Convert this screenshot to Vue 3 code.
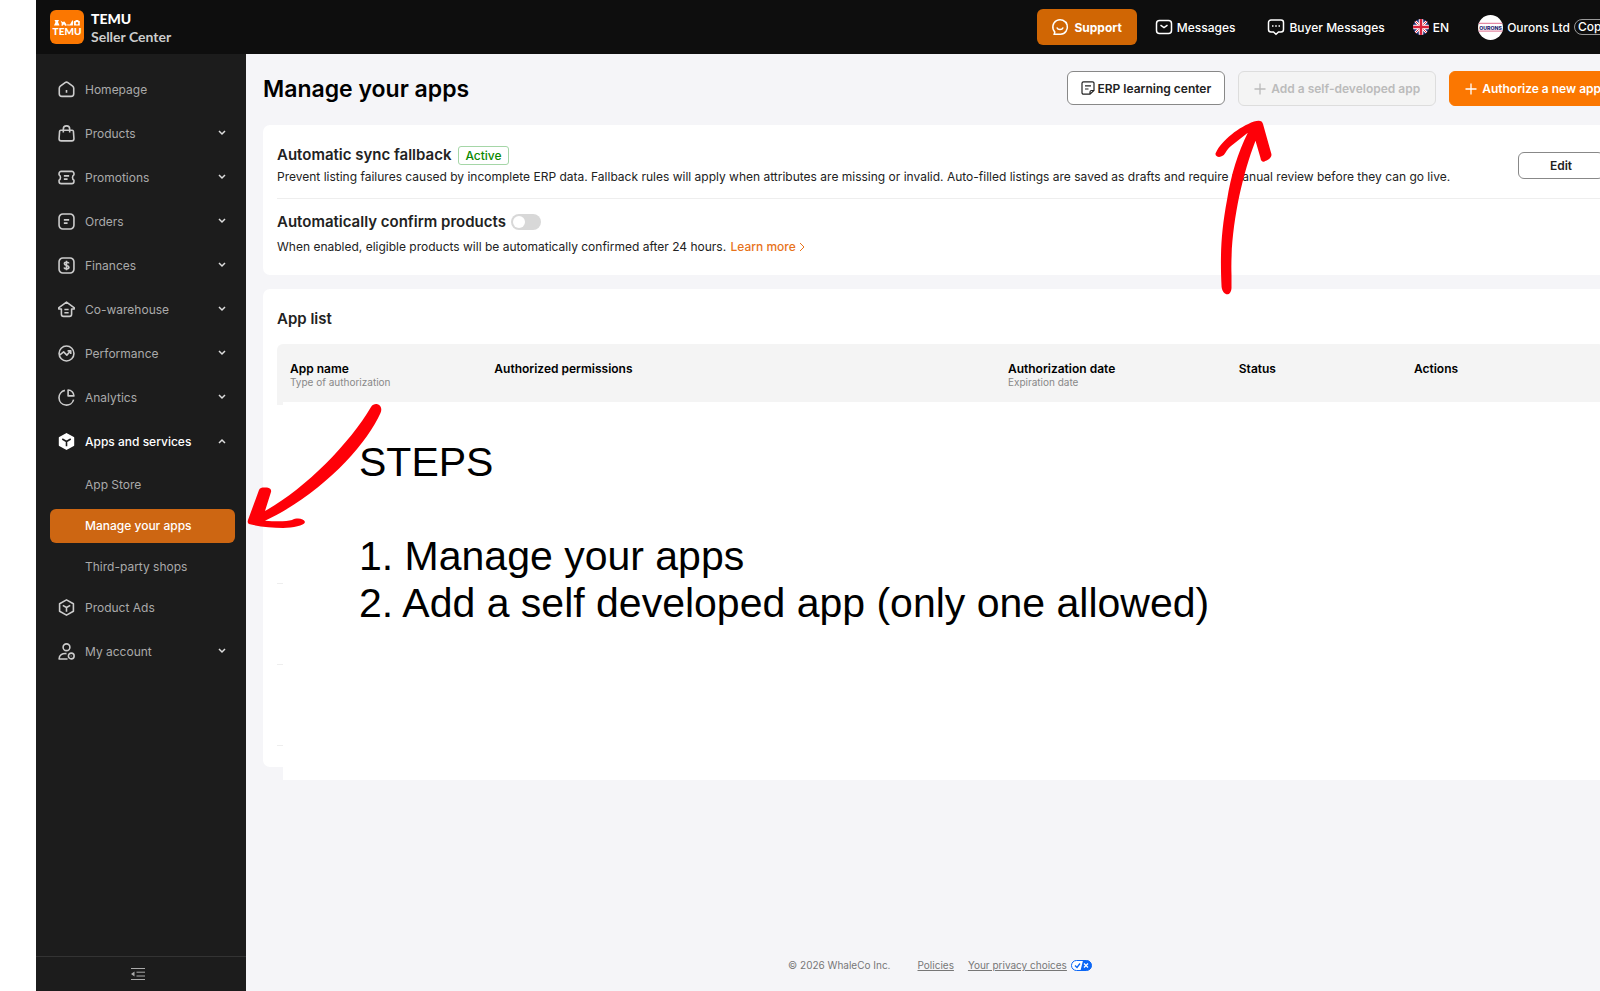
<template>
  <div class="viewport">
    <div class="shell">
      <header class="topbar">
        <a class="brand" href="#">
          <svg class="brand-logo" viewBox="0 0 34 34" aria-hidden="true">
            <rect width="34" height="34" rx="6" fill="#fb7701" />
            <g fill="#fff">
              <path d="M4.500 10h4.500l-1 2 1.500 3.500h-5.500L5.500 12z" />
              <path d="M10.500 10.500l2 1.500 2-.5 2 3v1.200h-1.500l-1-1.500-1.500 1.500h-1l.2-2.500z" />
              <path d="M17 14.500h3l2.500-4.500.8 2-.5 3.500h-5.500z" />
              <path fill-rule="evenodd" d="M25 11l1-1h2l1 1h.8v4.500h-5.800V11zM27 12a1.300 1.300 0 1 0 0 2.600 1.300 1.300 0 0 0 0-2.600z" />
            </g>
            <text class="logo-text" x="17" y="25" text-anchor="middle">TEMU</text>
          </svg>
          <span class="brand-name">
            <strong>TEMU</strong>
            <span>Seller Center</span>
          </span>
        </a>

        <div class="topbar-actions">
          <button class="support" type="button">
            <svg class="icon-top" viewBox="0 0 18 18">
              <path d="M3.200 16.200l.6-2.200A7.300 7.300 0 1 1 9.500 16.300z" />
              <path d="M5.800 9.500c1.200 2.800 5.200 2.800 6.400 0" />
            </svg>
            Support
          </button>
          <a class="top-link messages" href="#">
            <svg class="icon-top" viewBox="0 0 18 18">
              <rect x="1.500" y="2.500" width="15" height="13" rx="3" />
              <path d="M5.500 7.200L9 9.600l3.500-2.400" />
            </svg>
            Messages
          </a>
          <a class="top-link buyer" href="#">
            <svg class="icon-top" viewBox="0 0 18 18">
              <path d="M4 2h10a2.500 2.500 0 0 1 2.500 2.500v7A2.500 2.500 0 0 1 14 14h-2.500L9 16.200 6.500 14H4a2.500 2.500 0 0 1-2.500-2.500v-7A2.500 2.500 0 0 1 4 2z" />
              <path d="M5 8h1.500M8.200 8h1.600M11.500 8H13" />
            </svg>
            Buyer Messages
          </a>
          <button class="top-link language" type="button">
            <svg class="flag" viewBox="0 0 16 16">
              <defs>
                <clipPath id="flag-clip"><circle cx="8" cy="8" r="8" /></clipPath>
              </defs>
              <g clip-path="url(#flag-clip)">
                <rect width="16" height="16" fill="#1f2f7a" />
                <path d="M0 0l16 16M16 0L0 16" stroke="#fff" stroke-width="2.500" />
                <path d="M0 0l16 16M16 0L0 16" stroke="#d8203a" stroke-width="1" />
                <path d="M8 0v16M0 8h16" stroke="#fff" stroke-width="4.500" />
                <path d="M8 0v16M0 8h16" stroke="#d8203a" stroke-width="2.500" />
              </g>
            </svg>
            EN
          </button>
          <div class="account">
            <svg class="avatar" viewBox="0 0 24 24">
              <defs>
                <clipPath id="avatar-clip"><circle cx="12" cy="12" r="12" /></clipPath>
              </defs>
              <g clip-path="url(#avatar-clip)">
                <rect width="24" height="24" fill="#fff" />
                <path d="M0 8h24M0 15.500h24" stroke="#e58aa5" stroke-width="1.200" />
                <text class="avatar-text" x="12" y="14" text-anchor="middle">OURONS</text>
              </g>
            </svg>
            <span>Ourons Ltd</span>
            <button class="copy" type="button">Cop</button>
          </div>
        </div>
      </header>

      <div class="body">
        <aside class="sidebar">
          <nav class="nav">
            <template v-for="item in menu" :key="item.label">
              <a class="nav-item" :class="{ 'nav-item--open': item.children }" href="#">
                <svg class="nav-icon" viewBox="0 0 16 16">
                  <path v-if="item.solid" class="solid" :d="item.solid" />
                  <path :class="{ cut: item.solid }" :d="item.icon" />
                </svg>
                <span class="nav-label">{{ item.label }}</span>
                <svg v-if="item.arrow" class="chevron" viewBox="0 0 8 8">
                  <path :d="item.arrow === 'up' ? 'M1 6l3-3 3 3' : 'M1 2l3 3 3-3'" />
                </svg>
              </a>
              <div v-if="item.children" class="subnav">
                <a
                  v-for="child in item.children"
                  :key="child"
                  class="subnav-item"
                  :class="{ 'subnav-item--active': child === current }"
                  href="#"
                >{{ child }}</a>
              </div>
            </template>
          </nav>
          <button class="collapse" type="button" aria-label="Collapse menu">
            <svg viewBox="0 0 14 14">
              <path d="M0 1.500h14M5.500 5.200H14M5.500 9H14M0 12.500h14" />
              <path class="solid" d="M0 7l3.500-2.500v5z" />
            </svg>
          </button>
        </aside>

        <main class="main">
          <div class="page-head">
            <h1>Manage your apps</h1>
            <div class="page-actions">
              <button class="btn btn--erp" type="button">
                <svg class="icon-doc" viewBox="0 0 14 14">
                  <path d="M9 13.200H2.500A1.500 1.500 0 0 1 1 11.700V2.300A1.500 1.500 0 0 1 2.500.8h9A1.500 1.500 0 0 1 13 2.300V9.500zM9 13.200V11a1.500 1.500 0 0 1 1.500-1.500H13M4 4.800h6M4 8h3.500" />
                </svg>
                ERP learning center
              </button>
              <button class="btn btn--disabled" type="button" disabled>
                <svg class="icon-plus" viewBox="0 0 12 12"><path d="M6 .5v11M.5 6h11" /></svg>
                Add a self-developed app
              </button>
              <button class="btn btn--primary" type="button">
                <svg class="icon-plus" viewBox="0 0 12 12"><path d="M6 .5v11M.5 6h11" /></svg>
                Authorize a new app
              </button>
            </div>
          </div>

          <section class="card settings">
            <div class="setting">
              <div>
                <h2>Automatic sync fallback <span class="tag">Active</span></h2>
                <p>Prevent listing failures caused by incomplete ERP data. Fallback rules will apply when attributes are missing or invalid. Auto-filled listings are saved as drafts and require manual review before they can go live.</p>
              </div>
              <button class="btn btn--edit" type="button">Edit</button>
            </div>
            <div class="setting setting--confirm">
              <div>
                <h2>
                  <label for="auto-confirm">Automatically confirm products</label>
                  <input id="auto-confirm" v-model="autoConfirm" class="switch" type="checkbox" />
                </h2>
                <p>
                  When enabled, eligible products will be automatically confirmed after 24 hours.
                  <a class="learn" href="#">Learn more<svg viewBox="0 0 6 10"><path d="M1 1l4 4-4 4" /></svg></a>
                </p>
              </div>
            </div>
          </section>

          <section class="card list">
            <h2>App list</h2>
            <table class="apps">
              <thead>
                <tr>
                  <th v-for="col in columns" :key="col.title" :style="{ width: col.width }">
                    {{ col.title }}
                    <small v-if="col.sub">{{ col.sub }}</small>
                  </th>
                </tr>
              </thead>
              <tbody>
                <tr class="row--tall"><td colspan="5"></td></tr>
                <tr><td colspan="5"></td></tr>
                <tr><td colspan="5"></td></tr>
              </tbody>
            </table>
            <div class="steps">
              <p class="steps-title">STEPS</p>
              <p>1. Manage your apps</p>
              <p>2. Add a self developed app (only one allowed)</p>
            </div>
          </section>

          <footer class="footer">
            <span>© 2026 WhaleCo Inc.</span>
            <a href="#">Policies</a>
            <span class="privacy">
              <a href="#">Your privacy choices</a>
              <svg viewBox="0 0 21 11">
                <rect x=".5" y=".5" width="20" height="10" rx="5" fill="#fff" stroke="#0b66f5" />
                <path d="M12 .5h3.500a5 5 0 0 1 0 10H9.500z" fill="#0b66f5" />
                <path d="M4 5.500l2 2 3-4" fill="none" stroke="#0b66f5" stroke-width="1.300" />
                <path d="M13 3.500l4 4M17 3.500l-4 4" stroke="#fff" stroke-width="1.300" />
              </svg>
            </span>
          </footer>
        </main>
      </div>

      <!-- hand-drawn pointers for the two steps -->
      <svg class="pointer pointer--menu" viewBox="246 402 138 128" aria-hidden="true">
        <path d="M371 407C375 401 384 405 380.500 413C366 446 320 495 265 520.700C276 521.500 287 521.500 292 520C297 517.500 304 518.500 305 522C304 526 293 527.500 283 528C272 528 258 526.500 249 524Q247 523 248 520L259 490C260 487 264 487.300 267 487.600Q272 488.500 271 492L265 511C305 489 350 443 371 407z" />
      </svg>
      <svg class="pointer pointer--add" viewBox="1214 118 60 180" aria-hidden="true">
        <path d="M1221.600 287C1220 256 1221 232 1227 200C1231 175 1238 152 1247.800 132.700L1231 146C1225 151 1226 155 1221 156.500C1218 158 1214 155.500 1216 152.500C1222 140 1239 127 1254 121.500Q1262 119 1263 124L1271.400 154C1272 158 1268 160 1264 161.700Q1261 162 1260.500 158L1255.500 140.700C1241 178 1230 231 1231.500 275V288C1231 297 1223 296 1221.600 287z" />
      </svg>
    </div>
  </div>
</template>

<script setup>
import { ref } from 'vue'

const current = ref('Manage your apps')
const autoConfirm = ref(false)

const box = 'M8 .8l6.500 3.700v7L8 15.200l-6.500-3.700v-7z'
const frame = 'M4.500 1h7A3.500 3.500 0 0 1 15 4.500v7a3.500 3.500 0 0 1-3.500 3.500h-7A3.500 3.500 0 0 1 1 11.500v-7A3.500 3.500 0 0 1 4.500 1z'

const menu = [
  { label: 'Homepage', icon: 'M1.200 6.800c0-1 .4-1.500 1-2L6.700 1.500c.8-.6 1.800-.6 2.600 0l4.500 3.300c.6.500 1 1 1 2V12a2.500 2.500 0 0 1-2.500 2.500H3.700A2.500 2.500 0 0 1 1.200 12zM8 8.500v2.500' },
  { label: 'Products', arrow: 'down', icon: 'M2.500 5h11c.6 0 .9.300 1 .9l.5 7c0 1.300-.7 2-2 2H3c-1.300 0-2-.7-2-2l.5-7c.1-.6.4-.9 1-.9zM5 7V3.800a3 3 0 0 1 6 0V7' },
  { label: 'Promotions', arrow: 'down', icon: 'M3 2.200h10a2 2 0 0 1 2 2v1.300c-1.800 1-1.800 4 0 5v1.300a2 2 0 0 1-2 2H3a2 2 0 0 1-2-2v-1.300c1.800-1 1.800-4 0-5V4.200a2 2 0 0 1 2-2zM5.500 6.500h5M5.500 9.500h3.500' },
  { label: 'Orders', arrow: 'down', icon: frame + 'M5.500 6.500h5M5.500 9.500h3.500' },
  { label: 'Finances', arrow: 'down', icon: frame + 'M10.300 6C10 4.700 6 4.300 6 6.300S10.300 7.700 10.300 9.700 6 11.500 5.700 9.900M8 3.500v9' },
  { label: 'Co-warehouse', arrow: 'down', icon: 'M3.200 7.500H.8L.6 6.500 8 1l7.400 5.500-.2 1h-2.400v5a2 2 0 0 1-2 2H5.200a2 2 0 0 1-2-2zM6 8h4M6 11h4' },
  { label: 'Performance', arrow: 'down', icon: 'M8 1a7 7 0 1 0 0 14A7 7 0 0 0 8 1zM1.500 9.500l3.800-3 3 3 3.500-3.800M9 5.500h3v3' },
  { label: 'Analytics', arrow: 'down', icon: 'M6.500 1.300A7 7 0 1 0 14.700 10M9.500 1v5.500H15C15 3.500 12.500 1 9.500 1z' },
  {
    label: 'Apps and services',
    arrow: 'up',
    solid: box,
    icon: 'M4 5.700l4 2.300 4-2.300M8 8v4.500',
    children: ['App Store', 'Manage your apps', 'Third-party shops']
  },
  { label: 'Product Ads', icon: box + 'M4.500 6L8 8l3.500-2M8 8v4' },
  { label: 'My account', arrow: 'down', icon: 'M8 .8a3.200 3.200 0 1 0 0 6.400A3.200 3.200 0 0 0 8 .8zM8 10C4 9.500 1 11.500 1 15h8M12.500 9.500a2.700 2.700 0 1 0 0 5.400 2.700 2.700 0 0 0 0-5.400zM12.500 12v.5' }
]

const columns = [
  { title: 'App name', sub: 'Type of authorization', width: '15.4%' },
  { title: 'Authorized permissions', width: '38.7%' },
  { title: 'Authorization date', sub: 'Expiration date', width: '17.4%' },
  { title: 'Status', width: '13.2%' },
  { title: 'Actions', width: '15.3%' }
]
</script>

<style>
body {
  margin: 0;
  background: #fff;
}
</style>

<style scoped>
* {
  box-sizing: border-box;
}

h1,
h2,
p {
  margin: 0;
}

button {
  font: inherit;
  color: inherit;
  border: none;
  background: none;
  padding: 0;
  cursor: pointer;
}

a {
  color: inherit;
  text-decoration: none;
}

svg {
  flex: none;
  fill: none;
}

/* the console is a little wider than the window and is cut at the right */
.viewport {
  padding-left: 36px;
  overflow: hidden;
  font-family: Inter, "Liberation Sans", sans-serif;
  font-size: 12px;
  color: #222;
}

.shell {
  position: relative;
  display: flex;
  flex-direction: column;
  min-height: 100vh;
  margin-right: -34px;
}

.topbar {
  display: flex;
  align-items: center;
  justify-content: space-between;
  height: 54px;
  padding: 0 24px 0 14px;
  background: #0e0e0e;
  color: #fff;
}

.brand {
  display: flex;
  align-items: center;
  gap: 7px;
}

.brand-logo {
  width: 34px;
  height: 34px;
}

.logo-text {
  font: 900 10px Lato, sans-serif;
  fill: #fff;
}

.brand-name {
  display: flex;
  flex-direction: column;
  padding-top: 2px;
  font-family: Lato, sans-serif;
  font-size: 14px;
  font-weight: 700;
  line-height: 18px;
  color: #ccc;
}

.brand-name strong {
  color: #fff;
}

.topbar-actions,
.top-link,
.account {
  display: flex;
  align-items: center;
}

.topbar-actions {
  font-weight: 500;
}

.top-link {
  gap: 4px;
}

.support {
  display: flex;
  align-items: center;
  gap: 5px;
  height: 36px;
  padding: 0 15px 0 14px;
  border-radius: 6px;
  background: #d06604;
  font-weight: 700;
}

.icon-top {
  width: 18px;
  height: 18px;
  stroke: currentColor;
  stroke-width: 1.5;
}

.messages {
  margin-left: 18px;
}

.buyer {
  margin-left: 32px;
}

.language {
  margin-left: 28px;
}

.flag {
  width: 16px;
  height: 16px;
}

.account {
  gap: 4px;
  margin-left: 29px;
}

.avatar {
  width: 25px;
  height: 25px;
}

.avatar-text {
  font: 800 5px Inter, sans-serif;
  fill: #1f2370;
}

.copy {
  width: 36px;
  height: 16px;
  padding: 0 3px;
  border: 1px solid #999;
  border-radius: 8px;
  line-height: 14px;
  text-align: left;
}

.body {
  flex: 1;
  display: flex;
}

.sidebar {
  flex: none;
  display: flex;
  flex-direction: column;
  width: 210px;
  background: #1c1c1c;
  color: #aaa;
}

.nav {
  flex: 1;
  padding: 13px 11px 0 14px;
}

.nav-item {
  display: flex;
  align-items: center;
  height: 44px;
  padding: 0 9px 0 8px;
}

.nav-item--open {
  color: #fff;
  font-weight: 500;
}

.nav-icon {
  width: 17px;
  height: 17px;
  margin-right: 10px;
  color: #ccc;
  stroke: currentColor;
  stroke-width: 1.5;
  stroke-linejoin: round;
}

.nav-item--open .nav-icon {
  color: #fff;
}

.solid {
  fill: currentColor;
}

.cut {
  stroke: #1c1c1c;
}

.nav-label {
  flex: 1;
}

.chevron {
  width: 8px;
  height: 8px;
  stroke: #ddd;
  stroke-width: 1.5;
}

.subnav {
  display: grid;
  gap: 7px;
  padding: 5px 0 1px;
}

.subnav-item {
  height: 34px;
  padding-left: 35px;
  border-radius: 6px;
  line-height: 34px;
}

.subnav-item--active {
  background: #cd6612;
  color: #fff;
  font-weight: 500;
}

.collapse {
  display: flex;
  align-items: center;
  justify-content: center;
  height: 35px;
  padding-right: 6px;
  border-top: 1px solid #333;
}

.collapse svg {
  width: 14px;
  height: 14px;
  stroke: currentColor;
}

.collapse .solid {
  stroke: none;
}

.main {
  flex: 1;
  display: flex;
  flex-direction: column;
  min-width: 0;
  padding: 0 17px;
  background: #f5f5f8;
}

.page-head {
  display: flex;
  align-items: center;
  justify-content: space-between;
  height: 71px;
  padding-bottom: 2px;
}

h1 {
  font-size: 23px;
  font-weight: 600;
  line-height: 28px;
  color: #000;
}

.page-actions {
  display: flex;
  align-items: flex-start;
  gap: 13px;
}

.btn {
  display: flex;
  align-items: center;
  justify-content: center;
  gap: 5px;
  height: 35px;
  padding: 0 15px;
  border: 1px solid #888;
  border-radius: 6px;
  background: #fff;
  font-weight: 600;
  white-space: nowrap;
}

.btn--erp {
  gap: 2px;
  height: 34px;
  padding: 0 13px;
}

.btn--disabled {
  border-color: #ddd;
  background: #f4f4f4;
  color: #bbb;
  cursor: not-allowed;
}

.btn--primary {
  border-color: #fb7701;
  background: #fb7701;
  color: #fff;
}

.btn--edit {
  flex: none;
  width: 86px;
  height: 27px;
}

.icon-doc {
  width: 14px;
  height: 14px;
  stroke: currentColor;
  stroke-width: 1.2;
}

.icon-plus {
  width: 12px;
  height: 12px;
  stroke: currentColor;
  stroke-width: 1.3;
}

.card {
  padding: 0 13px 0 14px;
  border-radius: 7px;
  background: #fff;
}

.settings {
  height: 150px;
}

.setting {
  display: flex;
  align-items: center;
  justify-content: space-between;
  height: 74px;
  padding-top: 8px;
  border-bottom: 1px solid #eee;
}

h2 {
  display: flex;
  align-items: center;
  gap: 7px;
  font-size: 15px;
  font-weight: 600;
  line-height: 20px;
}

.setting p {
  margin-top: 3px;
  line-height: 18px;
  white-space: nowrap;
}

.setting--confirm {
  align-items: flex-start;
  padding-top: 13px;
  border-bottom: none;
}

.setting--confirm h2 {
  gap: 5px;
}

.setting--confirm p {
  margin-top: 6px;
}

.tag {
  padding: 0 6px;
  border: 1px solid #a5d6a7;
  border-radius: 3px;
  color: #0a8800;
  font-size: 12px;
  font-weight: 500;
  line-height: 17px;
}

.switch {
  appearance: none;
  display: flex;
  align-items: center;
  width: 30px;
  height: 16px;
  margin: 0;
  padding: 0 2px;
  border-radius: 8px;
  background: #d8d8d8;
}

.switch::before {
  content: "";
  width: 12px;
  height: 12px;
  border-radius: 50%;
  background: #fff;
}

.switch:checked {
  justify-content: flex-end;
  background: #fb7701;
}

.learn {
  margin-left: 1px;
  color: #e8731a;
  font-weight: 500;
}

.learn svg {
  width: 6px;
  height: 10px;
  margin-left: 3px;
  stroke: currentColor;
  vertical-align: -1px;
}

.list {
  position: relative;
  height: 478px;
  margin-top: 14px;
  padding-top: 20px;
}

.apps {
  width: 100%;
  margin-top: 15px;
  border-collapse: separate;
  border-spacing: 0;
  table-layout: fixed;
}

th {
  height: 61px;
  padding: 17px 13px 0;
  background: #f4f4f4;
  color: #000;
  font-weight: 600;
  line-height: 15px;
  text-align: left;
  vertical-align: top;
}

th:first-child {
  border-top-left-radius: 6px;
}

th:last-child {
  border-top-right-radius: 6px;
}

th small {
  display: block;
  color: #888;
  font-size: 10px;
  font-weight: 400;
  line-height: 13px;
}

td {
  height: 81px;
  padding: 0;
  border-bottom: 1px solid #eee;
}

.row--tall td {
  height: 179px;
}

.steps {
  position: absolute;
  top: 113px;
  left: 20px;
  right: 0;
  height: 378px;
  padding: 37px 0 0 76px;
  background: #fff;
  color: #000;
  font-family: "Liberation Sans", Arial, sans-serif;
  font-size: 41px;
  line-height: 47px;
}

.steps-title {
  margin-bottom: 47px;
}

.footer {
  display: flex;
  align-items: center;
  justify-content: center;
  gap: 27px;
  margin-top: auto;
  padding: 18px 0;
  color: #777;
  font-size: 10px;
  line-height: 15px;
}

.footer a {
  text-decoration: underline;
}

.privacy {
  display: flex;
  align-items: center;
  gap: 4px;
  margin-left: -13px;
}

.privacy svg {
  width: 21px;
  height: 11px;
}

.pointer {
  position: absolute;
  fill: #fe0008;
  pointer-events: none;
}

.pointer--menu {
  top: 402px;
  left: 210px;
  width: 138px;
  height: 128px;
}

.pointer--add {
  top: 118px;
  right: 360px;
  width: 60px;
  height: 180px;
}
</style>
